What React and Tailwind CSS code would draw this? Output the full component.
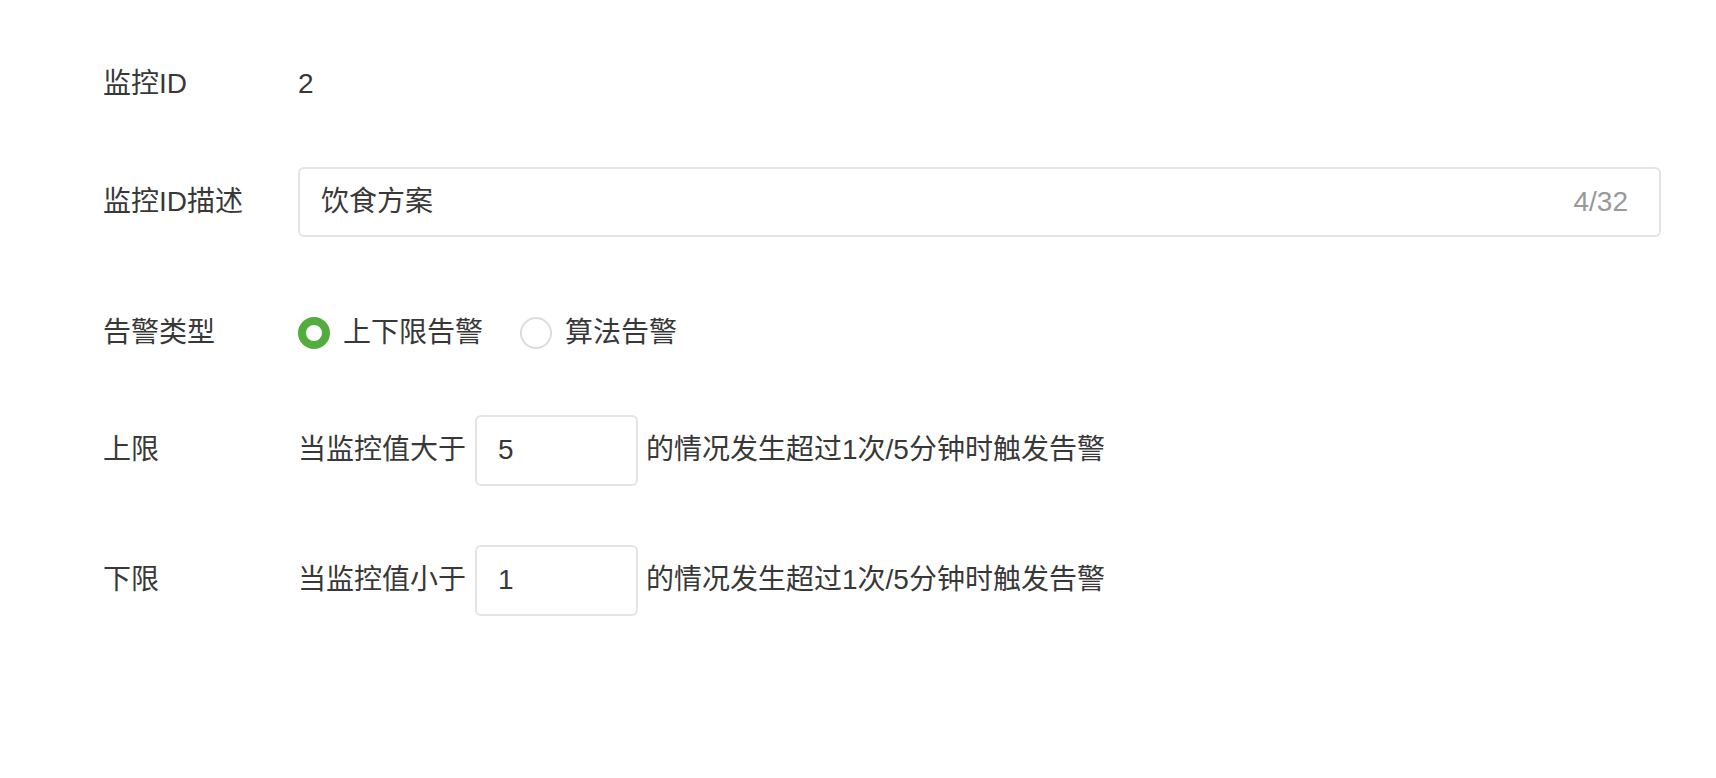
import React from "react";

const font = { fontFamily: '"Liberation Sans", "Noto Sans CJK SC", sans-serif' };

function Row({ label, className = "", children }) {
  return (
    <div className={"flex items-center h-[70px] " + className}>
      <div className="w-[195px] shrink-0 text-[28px] text-[#383838] leading-none">{label}</div>
      <div className="flex items-center flex-1 min-w-0 text-[28px] text-[#383838] leading-none">{children}</div>
    </div>
  );
}

export default function App() {
  return (
    <div
      className="w-[1716px] h-[778px] bg-white pl-[103px] pr-[55px] pt-[49px] font-['Liberation_Sans','Noto_Sans_CJK_SC',sans-serif]"
      style={font}
    >
      <Row label="监控ID">
        <span>2</span>
      </Row>

      <Row label="监控ID描述" className="mt-[48px]">
        <div className="flex items-center justify-between w-full h-[70px] border-2 border-[#e4e4e4] rounded-[6px] pl-[21px] pr-[31px]">
          <span>饮食方案</span>
          <span className="text-[#999999]">4/32</span>
        </div>
      </Row>

      <Row label="告警类型" className="mt-[61px]">
        <div className="flex items-center">
          <span className="w-[32px] h-[32px] rounded-full border-[8px] border-[#52ad3c] bg-white box-border"></span>
          <span className="ml-[13px]">上下限告警</span>
        </div>
        <div className="flex items-center ml-[37px]">
          <span className="w-[32px] h-[32px] rounded-full border-2 border-[#dcdcdc] bg-white box-border"></span>
          <span className="ml-[13px]">算法告警</span>
        </div>
      </Row>

      <Row label="上限" className="mt-[47px]">
        <span>当监控值大于</span>
        <div className="ml-[9px] w-[163px] h-[71px] border-2 border-[#e4e4e4] rounded-[6px] flex items-center pl-[21px]">
          5
        </div>
        <span className="ml-[8px]">的情况发生超过1次/5分钟时触发告警</span>
      </Row>

      <Row label="下限" className="mt-[60px]">
        <span>当监控值小于</span>
        <div className="ml-[9px] w-[163px] h-[71px] border-2 border-[#e4e4e4] rounded-[6px] flex items-center pl-[21px]">
          1
        </div>
        <span className="ml-[8px]">的情况发生超过1次/5分钟时触发告警</span>
      </Row>
    </div>
  );
}
